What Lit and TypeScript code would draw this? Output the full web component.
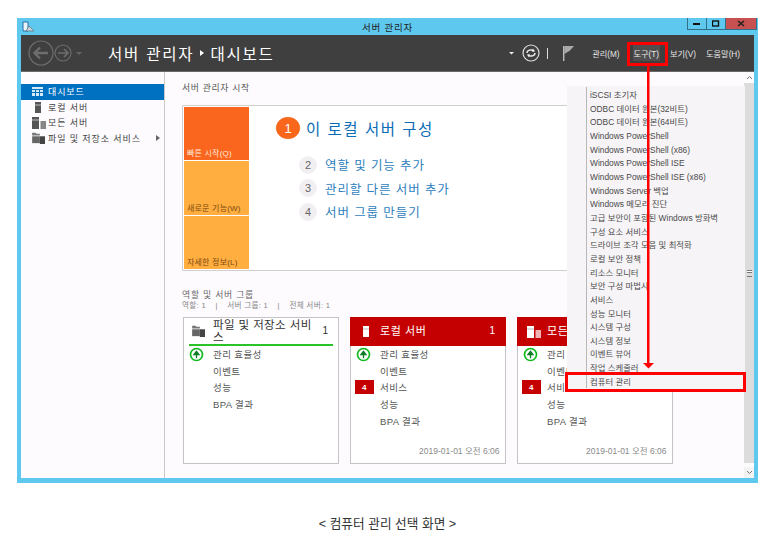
import { LitElement, html, css, svg } from 'lit';
import { customElement } from 'lit/decorators.js';

const toolItems = [
  'iSCSI 초기자', 'ODBC 데이터 원본(32비트)', 'ODBC 데이터 원본(64비트)', 'Windows PowerShell',
  'Windows PowerShell (x86)', 'Windows PowerShell ISE', 'Windows PowerShell ISE (x86)', 'Windows Server 백업',
  'Windows 메모리 진단', '고급 보안이 포함된 Windows 방화벽', '구성 요소 서비스', '드라이브 조각 모음 및 최적화',
  '로컬 보안 정책', '리소스 모니터', '보안 구성 마법사', '서비스', '성능 모니터', '시스템 구성', '시스템 정보',
  '이벤트 뷰어', '작업 스케줄러', '컴퓨터 관리',
];

const upIcon = svg`<svg class="up" viewBox="0 0 16 16" width="15" height="15">
  <circle cx="8" cy="8" r="6.4" fill="#fff" stroke="#10b81e" stroke-width="1.8"/>
  <path d="M8 12V7M5.4 8L8 4.6 10.6 8Z" fill="#0c7d24" stroke="#0c7d24" stroke-width="1.4"/>
</svg>`;

const serverIcon = (c: string) => svg`<svg viewBox="0 0 6 11" width="6" height="11">
  <rect width="6" height="11" fill="${c}"/><rect y="2.5" width="6" height="1" fill="#bbb"/>
</svg>`;

const allIcon = (c: string) => svg`<svg viewBox="0 0 14 12" width="14" height="12">
  <rect width="7" height="12" fill="${c}"/><rect y="2.5" width="7" height="1" fill="#bbb"/>
  <rect x="8.5" y="4" width="5.5" height="8" fill="${c}" opacity=".7"/>
</svg>`;

const fileIcon = svg`<svg viewBox="0 0 16 14" width="14" height="12">
  <path d="M0 1h4l1 1h4v2H0Z" fill="#777"/><rect x="0" y="5" width="9" height="8" fill="#666"/>
  <rect x="9" y="5" width="6" height="9" fill="#444"/>
</svg>`;

@customElement('server-card')
class ServerCard extends LitElement {
  static properties = {
    label: { type: String },
    count: { type: String },
    red: { type: Boolean, reflect: true },
    alert: { type: Boolean },
    date: { type: String },
    kind: { type: String, reflect: true },
  };

  declare label: string;
  declare count: string;
  declare red: boolean;
  declare alert: boolean;
  declare date: string;
  declare kind: string;

  static styles = css`
    :host {
      display: flex;
      flex-direction: column;
      width: 155.5px;
      height: 147px;
      box-sizing: border-box;
      border: 1px solid #c4c4c4;
      background: #fff;
      color: #555;
    }
    .head {
      height: 26px;
      flex: none;
      display: flex;
      align-items: center;
      margin: 0 5px;
      padding: 0 0 0 3px;
      border-bottom: 2px solid #2ac32a;
      color: #333;
      font-size: 11.5px;
      line-height: 12.5px;
      letter-spacing: 0.4px;
    }
    :host([red]) .head {
      margin: -1px -1px 0;
      height: 29px;
      padding: 0 6px 0 13px;
      border: 0;
      background: #c40000;
      color: #fff;
      font-size: 11px;
      letter-spacing: 0.6px;
    }
    .ico { width: 21px; flex: none; display: flex; }
    :host([red]) .ico { width: 17px; }
    :host([red][kind="all"]) .ico { width: 18px; margin-left: -3px; margin-right: 2px; }
    .ttl { flex: 1; }
    .cnt { width: 14px; text-align: center; font-size: 10px; }
    .row {
      height: 16.6px;
      display: flex;
      align-items: center;
      font-size: 9.5px;
      letter-spacing: 0.4px;
    }
    .mark { width: 29px; padding-left: 5px; flex: none; display: flex; box-sizing: border-box; }
    .badge {
      width: 19px;
      height: 14px;
      margin-left: -1px;
      background: #c40000;
      color: #fff;
      font-size: 8px;
      font-weight: 700;
      display: flex;
      align-items: center;
      justify-content: center;
    }
    .foot {
      margin-top: auto;
      padding: 0 5px 7px 0;
      text-align: right;
      font-size: 8.5px;
      color: #8a8a8a;
    }
  `;

  render() {
    const icon = this.kind === 'file' ? fileIcon : this.kind === 'local' ? serverIcon('#fff') : allIcon('#fff');
    return html`
      <div class="head">
        <span class="ico">${icon}</span>
        <span class="ttl">${this.label}</span>
        <span class="cnt">${this.count}</span>
      </div>
      <div class="rows">
        <div class="row"><span class="mark">${upIcon}</span>관리 효율성</div>
        <div class="row"><span class="mark"></span>이벤트</div>
        ${this.alert
          ? html`<div class="row"><span class="mark"><span class="badge">4</span></span>서비스</div>`
          : ''}
        <div class="row"><span class="mark"></span>성능</div>
        <div class="row"><span class="mark"></span>BPA 결과</div>
      </div>
      ${this.date ? html`<div class="foot">${this.date}</div>` : ''}
    `;
  }
}

@customElement('app-root')
class AppRoot extends LitElement {
  static styles = css`
    :host {
      display: block;
      position: relative;
      width: 777px;
      height: 545px;
      overflow: hidden;
      background: #fff;
      font-family: "Liberation Sans", "Noto Sans CJK KR", sans-serif;
    }
    .page { padding: 18px 0 0 17px; }
    .win {
      width: 741px;
      height: 465px;
      box-sizing: border-box;
      padding: 0 4px 5px;
      background: #5ec8ee;
      display: flex;
      flex-direction: column;
    }
    .title {
      height: 17px;
      flex: none;
      display: flex;
      align-items: center;
      position: relative;
      font-size: 9.5px;
      color: #222;
      letter-spacing: 0.8px;
    }
    .title-text { flex: 1; text-align: center; padding-top: 1px; }
    .app-ico { position: absolute; left: 1px; top: 3px; }
    .win-btns {
      position: absolute;
      right: -3px;
      top: 0;
      display: flex;
      height: 12px;
      border: 1px solid #2f6f8a;
      border-top: 0;
      box-sizing: border-box;
    }
    .win-btns span {
      width: 18px;
      display: flex;
      align-items: center;
      justify-content: center;
      border-right: 1px solid #2f6f8a;
    }
    .win-btns .close { width: 30px; background: #c75050; border-right: 0; }
    .bar {
      height: 37px;
      flex: none;
      box-sizing: border-box;
      background: #3f3f3f;
      border-bottom: 1px solid #6a6a6a;
      display: flex;
      align-items: center;
      color: #fff;
    }
    .nav-svg { margin-left: 7px; flex: none; }
    .crumb {
      margin-left: 24px;
      font-size: 15.5px;
      letter-spacing: 1.8px;
      display: flex;
      align-items: center;
      gap: 6px;
    }
    .tri { width: 0; height: 0; border-left: 4px solid #fff; border-top: 3px solid transparent; border-bottom: 3px solid transparent; }
    .tools { margin-left: auto; display: flex; align-items: center; }
    .tools svg { flex: none; }
    .drop { margin-right: 7px; }
    .sep { width: 1px; height: 11px; background: #ddd; margin: 0 14px 0 7px; }
    .menus { display: flex; margin: 0 14px 0 17px; font-size: 8.2px; color: #e6e6e6; }
    .menus span + span { margin-left: 10px; }
    .menus span:nth-child(2) { margin-left: 13px; }
    .menus .on { background: #4f4f4f; padding: 2px 1px; margin-top: -2px; margin-bottom: -2px; }
    .main { flex: 1; min-height: 0; display: flex; background: #fdfbfe; }
    .side {
      width: 144px;
      flex: none;
      box-sizing: border-box;
      border-right: 1px solid #c9c9c9;
      padding-top: 12px;
      font-size: 9px;
      letter-spacing: 0.9px;
      color: #444;
    }
    .side-item { height: 15.5px; display: flex; align-items: center; padding-left: 11px; }
    .side-item.on { background: #0070c0; color: #fff; }
    .side-ico { width: 16px; flex: none; display: flex; justify-content: flex-start; }
    .side-ico.thin { padding-left: 3px; width: 13px; }
    .side-item .more {
      margin-left: auto;
      margin-right: 4px;
      width: 0;
      height: 0;
      border-left: 4px solid #666;
      border-top: 3px solid transparent;
      border-bottom: 3px solid transparent;
    }
    .content { flex: 1; min-width: 0; padding: 10px 0 0 17px; }
    .h { font-size: 8.8px; line-height: 13px; letter-spacing: 0.7px; color: #555; }
    .welcome {
      margin-top: 10px;
      height: 166px;
      box-sizing: border-box;
      border: 1px solid #cfcfcf;
      border-right: 0;
      padding: 1px;
      display: flex;
      background: #fff;
    }
    .tiles { width: 65px; flex: none; display: flex; flex-direction: column; gap: 1px; }
    .tile {
      flex: 1;
      display: flex;
      align-items: flex-end;
      padding: 0 0 2px 3px;
      background: #ffae3f;
      color: #7a4a10;
      font-size: 8px;
      letter-spacing: 0.2px;
    }
    .tile.first { background: #fb661e; color: #ffe9dc; }
    .steps { padding: 9px 0 0 27px; }
    .step-main { display: flex; align-items: center; gap: 6px; color: #0a6cb5; font-size: 15.5px; letter-spacing: 1.5px; height: 24px; margin-bottom: 13px; }
    .num1 {
      width: 24px;
      height: 22px;
      border-radius: 50%;
      background: #f9661c;
      color: #fff;
      font-size: 13px;
      letter-spacing: 0;
      display: flex;
      align-items: center;
      justify-content: center;
    }
    .step { display: flex; align-items: center; gap: 8px; height: 23.6px; margin-left: 23px; color: #2f7fbd; font-size: 12.5px; letter-spacing: 0.9px; }
    .num {
      width: 18px;
      height: 18px;
      border-radius: 50%;
      background: #f2eff3;
      color: #666;
      font-size: 11px;
      letter-spacing: 0;
      display: flex;
      align-items: center;
      justify-content: center;
    }
    .group { margin-top: 19px; }
    .h2 { font-size: 8.8px; line-height: 11px; letter-spacing: 0.8px; color: #666; }
    .sub { display: flex; gap: 9.5px; font-size: 7.6px; line-height: 10px; letter-spacing: 0.3px; color: #888; }
    .cards { display: flex; gap: 11.5px; margin: 6px 0 0 1px; }
    .scroll {
      width: 10px;
      flex: none;
      background: #fdfbfe;
      display: flex;
      flex-direction: column;
      align-items: center;
    }
    .sb-btn { height: 11px; flex: none; font-size: 0; display: flex; align-items: center; justify-content: center; }
    .track {
      height: 380px;
      width: 100%;
      background: #dcdcdc;
      display: flex;
      align-items: center;
      justify-content: center;
    }
    .grip { width: 5px; height: 5px; border-top: 1px solid #777; border-bottom: 1px solid #777; background: linear-gradient(#fff 0 1px, #777 1px 2px, #dcdcdc 2px); }
    .down { margin-top: auto; background: #f3f3f3; width: 100%; }
    .menu {
      position: absolute;
      left: 567px;
      top: 86px;
      width: 178px;
      height: 305px;
      box-sizing: border-box;
      background: #f6f4f7;
      padding: 3px 0 0 0;
      font-size: 8.4px;
      color: #4a4a4a;
    }
    .menu::before {
      content: '';
      position: absolute;
      left: 19px;
      top: 1px;
      bottom: 3px;
      width: 1px;
      background: #b8b8b8;
    }
    .menu div { height: 13.67px; line-height: 13.67px; padding-left: 23px; white-space: nowrap; }
    .mark-box { position: absolute; box-sizing: border-box; border: 3px solid #f00; }
    .mark-tool { left: 627px; top: 42px; width: 41px; height: 24px; }
    .mark-row { left: 565px; top: 372px; width: 181px; height: 20px; }
    .arrow { position: absolute; left: 642px; top: 65px; }
    .caption {
      margin-top: 30px;
      width: 741px;
      text-align: center;
      font-size: 12.7px;
      color: #333;
    }
  `;

  render() {
    return html`
      <div class="page">
        <div class="win">
          <div class="title">
            <svg class="app-ico" width="13" height="12" viewBox="0 0 13 12">
              <path d="M1 1h5v9H1Z" fill="#e9f4fb" stroke="#2b6fa8"/>
              <path d="M4 10l3-5 5 5Z" fill="#c9d3da" stroke="#5b6d7a" stroke-width=".7"/>
            </svg>
            <span class="title-text">서버 관리자</span>
            <div class="win-btns">
              <span><svg width="8" height="4"><rect y="1" width="7" height="2" fill="#111"/></svg></span>
              <span><svg width="8" height="7"><rect x=".5" y="1" width="6" height="5" fill="none" stroke="#111" stroke-width="1.4"/></svg></span>
              <span class="close"><svg width="8" height="7" viewBox="0 0 8 7"><path d="M1 1l6 5M7 1L1 6" stroke="#222" stroke-width="1.6"/></svg></span>
            </div>
          </div>

          <div class="bar">
            <svg class="nav-svg" width="56" height="28" viewBox="0 0 56 28" fill="none">
              <circle cx="13" cy="14" r="12" stroke="#6e6e6e" stroke-width="1.2"/>
              <path d="M20 14H7M12 8.5L6.5 14l5.5 5.5" stroke="#6e6e6e" stroke-width="2.4"/>
              <circle cx="35" cy="14" r="8" stroke="#6e6e6e" stroke-width="1.1"/>
              <path d="M30 14h9M36 10l4 4-4 4" stroke="#6e6e6e" stroke-width="1.6"/>
              <path d="M48 13h6l-3 3Z" fill="#666"/>
            </svg>
            <div class="crumb"><span>서버 관리자</span><span class="tri"></span><span>대시보드</span></div>
            <div class="tools">
              <svg class="drop" width="6" height="4"><path d="M0 1h5L2.5 3.5Z" fill="#eee"/></svg>
              <svg width="18" height="18" viewBox="0 0 18 18" fill="none">
                <circle cx="9" cy="9" r="8" stroke="#ddd" stroke-width="1.2"/>
                <path d="M5 9a4 3 0 0 1 7-2M13 9a4 3 0 0 1-7 2" stroke="#eee" stroke-width="1.4"/>
                <path d="M11 4.5l2 3-3 .2ZM7 13.5l-2-3 3-.2Z" fill="#eee"/>
              </svg>
              <span class="sep"></span>
              <svg width="13" height="17" viewBox="0 0 13 17">
                <rect x="1" y="1" width="1.4" height="15" fill="#bdbdbd"/>
                <path d="M2.4 1H12L8 5.5 2.4 9Z" fill="#a9a9a9"/>
              </svg>
              <div class="menus"><span>관리(M)</span><span class="on">도구(T)</span><span>보기(V)</span><span>도움말(H)</span></div>
            </div>
          </div>

          <div class="main">
            <div class="side">
              <div class="side-item on">
                <span class="side-ico"><svg width="11" height="9"><rect width="11" height="9" fill="#d8e9f6"/><path d="M0 2.5h11M0 5.5h11M3.5 3v6M7.5 3v6" stroke="#0070c0"/></svg></span>
                <span>대시보드</span>
              </div>
              <div class="side-item"><span class="side-ico thin">${serverIcon('#555')}</span>로컬 서버</div>
              <div class="side-item"><span class="side-ico">${allIcon('#555')}</span>모든 서버</div>
              <div class="side-item"><span class="side-ico">${fileIcon}</span>파일 및 저장소 서비스<span class="more"></span></div>
            </div>

            <div class="content">
              <div class="h">서버 관리자 시작</div>
              <div class="welcome">
                <div class="tiles">
                  <div class="tile first">빠른 시작(Q)</div>
                  <div class="tile">새로운 기능(W)</div>
                  <div class="tile">자세한 정보(L)</div>
                </div>
                <div class="steps">
                  <div class="step-main"><span class="num1">1</span>이 로컬 서버 구성</div>
                  <div class="step"><span class="num">2</span>역할 및 기능 추가</div>
                  <div class="step"><span class="num">3</span>관리할 다른 서버 추가</div>
                  <div class="step"><span class="num">4</span>서버 그룹 만들기</div>
                </div>
              </div>
              <div class="group">
                <div class="h2">역할 및 서버 그룹</div>
                <div class="sub"><span>역할: 1</span><span>|</span><span>서버 그룹: 1</span><span>|</span><span>전체 서버: 1</span></div>
                <div class="cards">
                  <server-card kind="file" label="파일 및 저장소 서비스" count="1"></server-card>
                  <server-card red alert kind="local" label="로컬 서버" count="1" date="2019-01-01 오전 6:06"></server-card>
                  <server-card red alert kind="all" label="모든 서버" count="1" date="2019-01-01 오전 6:06"></server-card>
                </div>
              </div>
            </div>

            <div class="scroll">
              <div class="sb-btn"><svg width="7" height="5"><path d="M1 4l2.5-2.5L6 4" fill="none" stroke="#777"/></svg></div>
              <div class="track"><span class="grip"></span></div>
              <div class="sb-btn down"><svg width="7" height="5"><path d="M1 1l2.5 2.5L6 1" fill="none" stroke="#777"/></svg></div>
            </div>
          </div>
        </div>
        <div class="caption">&lt; 컴퓨터 관리 선택 화면 &gt;</div>
      </div>

      <div class="menu">${toolItems.map((t) => html`<div>${t}</div>`)}</div>
      <div class="mark-box mark-tool"></div>
      <div class="mark-box mark-row"></div>
      <svg class="arrow" width="13" height="305" viewBox="0 0 13 305">
        <rect x="5" y="0" width="2.5" height="299" fill="#f00"/>
        <path d="M1 298h11l-5.5 5.5Z" fill="#f00"/>
      </svg>
    `;
  }
}
